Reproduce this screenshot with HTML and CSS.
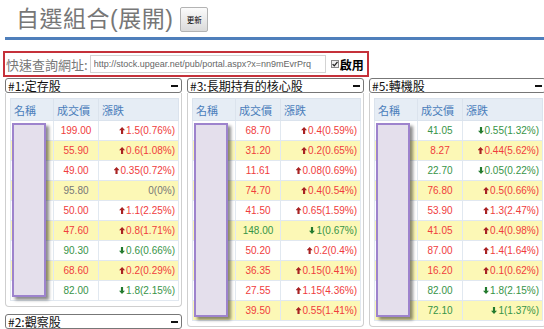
FILE: index.html
```html
<!DOCTYPE html>
<html lang="zh-Hant">

<head>
    <meta charset="UTF-8">
    <title>自選組合(展開)</title>
    <link rel="stylesheet" href="styles.css">
</head>

<body>

    <div class="top">
        <h1 class="title">自選組合(展開)</h1>
        <button class="refresh">更新</button>
    </div>
    <div class="rule"></div>

    <div class="quick">
        <span class="quick-label">快速查詢網址:</span>
        <input class="quick-url" type="text" value="http://stock.upgear.net/pub/portal.aspx?x=nn9mEvrPrq">
        <svg class="check" viewBox="0 0 8 8" width="8" height="8">
            <rect x="0.5" y="0.5" width="7" height="7" fill="#eee" stroke="#888" />
            <path d="M1.6 4.1 L3.3 5.8 L6.5 1.8" fill="none" stroke="#222" stroke-width="1.3" />
        </svg>
        <span class="enable">啟用</span>
    </div>

    <div class="board">
        <!-- column 1 -->
        <div class="col">
            <div class="panel">
                <div class="panel-head"><span>#1:定存股</span><i class="fold"></i></div>
                <div class="panel-body">
                    <div class="grid-wrap">
                        <table class="quotes">
                            <colgroup><col class="c-name"><col class="c-price"><col class="c-chg"></colgroup>
                            <thead><tr><th>名稱</th><th>成交價</th><th>漲跌</th></tr></thead>
                            <tbody>
                                <tr class="up"><td></td><td class="price">199.00</td><td class="chg">1.5(0.76%)</td></tr>
                                <tr class="up"><td></td><td class="price">55.90</td><td class="chg">0.6(1.08%)</td></tr>
                                <tr class="up"><td></td><td class="price">49.00</td><td class="chg">0.35(0.72%)</td></tr>
                                <tr class="flat"><td></td><td class="price">95.80</td><td class="chg">0(0%)</td></tr>
                                <tr class="up"><td></td><td class="price">50.00</td><td class="chg">1.1(2.25%)</td></tr>
                                <tr class="up"><td></td><td class="price">47.60</td><td class="chg">0.8(1.71%)</td></tr>
                                <tr class="down"><td></td><td class="price">90.30</td><td class="chg">0.6(0.66%)</td></tr>
                                <tr class="up"><td></td><td class="price">68.60</td><td class="chg">0.2(0.29%)</td></tr>
                                <tr class="down"><td></td><td class="price">82.00</td><td class="chg">1.8(2.15%)</td></tr>
                            </tbody>
                        </table>
                        <div class="mask"></div>
                    </div>
                </div>
            </div>
            <div class="panel">
                <div class="panel-head"><span>#2:觀察股</span><i class="fold"></i></div>
                <div class="panel-body panel-empty"></div>
            </div>
        </div>

        <!-- column 2 -->
        <div class="col">
            <div class="panel">
                <div class="panel-head"><span>#3:長期持有的核心股</span><i class="fold"></i></div>
                <div class="panel-body">
                    <div class="grid-wrap">
                        <table class="quotes">
                            <colgroup><col class="c-name"><col class="c-price"><col class="c-chg"></colgroup>
                            <thead><tr><th>名稱</th><th>成交價</th><th>漲跌</th></tr></thead>
                            <tbody>
                                <tr class="up"><td></td><td class="price">68.70</td><td class="chg">0.4(0.59%)</td></tr>
                                <tr class="up"><td></td><td class="price">31.20</td><td class="chg">0.2(0.65%)</td></tr>
                                <tr class="up"><td></td><td class="price">11.61</td><td class="chg">0.08(0.69%)</td></tr>
                                <tr class="up"><td></td><td class="price">74.70</td><td class="chg">0.4(0.54%)</td></tr>
                                <tr class="up"><td></td><td class="price">41.50</td><td class="chg">0.65(1.59%)</td></tr>
                                <tr class="down"><td></td><td class="price">148.00</td><td class="chg">1(0.67%)</td></tr>
                                <tr class="up"><td></td><td class="price">50.20</td><td class="chg">0.2(0.4%)</td></tr>
                                <tr class="up"><td></td><td class="price">36.35</td><td class="chg">0.15(0.41%)</td></tr>
                                <tr class="up"><td></td><td class="price">27.55</td><td class="chg">1.15(4.36%)</td></tr>
                                <tr class="up"><td></td><td class="price">39.50</td><td class="chg">0.55(1.41%)</td></tr>
                            </tbody>
                        </table>
                        <div class="mask"></div>
                    </div>
                </div>
            </div>
        </div>

        <!-- column 3 -->
        <div class="col">
            <div class="panel">
                <div class="panel-head"><span>#5:轉機股</span><i class="fold"></i></div>
                <div class="panel-body">
                    <div class="grid-wrap">
                        <table class="quotes">
                            <colgroup><col class="c-name"><col class="c-price"><col class="c-chg"></colgroup>
                            <thead><tr><th>名稱</th><th>成交價</th><th>漲跌</th></tr></thead>
                            <tbody>
                                <tr class="down"><td></td><td class="price">41.05</td><td class="chg">0.55(1.32%)</td></tr>
                                <tr class="up"><td></td><td class="price">8.27</td><td class="chg">0.44(5.62%)</td></tr>
                                <tr class="down"><td></td><td class="price">22.70</td><td class="chg">0.05(0.22%)</td></tr>
                                <tr class="up"><td></td><td class="price">76.80</td><td class="chg">0.5(0.66%)</td></tr>
                                <tr class="up"><td></td><td class="price">53.90</td><td class="chg">1.3(2.47%)</td></tr>
                                <tr class="up"><td></td><td class="price">41.05</td><td class="chg">0.4(0.98%)</td></tr>
                                <tr class="up"><td></td><td class="price">87.00</td><td class="chg">1.4(1.64%)</td></tr>
                                <tr class="up"><td></td><td class="price">16.20</td><td class="chg">0.1(0.62%)</td></tr>
                                <tr class="down"><td></td><td class="price">82.00</td><td class="chg">1.8(2.15%)</td></tr>
                                <tr class="down"><td></td><td class="price">72.10</td><td class="chg">1(1.37%)</td></tr>
                            </tbody>
                        </table>
                        <div class="mask"></div>
                    </div>
                </div>
            </div>
        </div>
    </div>

</body>

</html>
```

FILE: styles.css
```css
* {
    box-sizing: border-box;
}

html,
body {
    overflow: hidden;
}

body {
    margin: 0;
    padding: 0 0 0 3px;
    background: #fff;
    color: #333;
    font-family: "Liberation Sans", "Noto Sans CJK TC", sans-serif;
}

/* title bar */
.top {
    display: flex;
    align-items: flex-start;
    height: 37px;
    padding-left: 13px;
}

.title {
    margin: 5px 0 0;
    font-size: 23px;
    line-height: 28px;
    font-weight: normal;
    color: #777;
    letter-spacing: 0.5px;
}

.refresh {
    margin: 7px 0 0 7px;
    width: 28px;
    height: 25px;
    padding: 0;
    border: 1px solid #b3b3b3;
    border-radius: 2px;
    background: linear-gradient(#fbfbfb, #dadada);
    font-family: "Noto Sans CJK TC", sans-serif;
    font-size: 7.5px;
    color: #000;
}

.rule {
    height: 3px;
    margin-left: 2px;
    background: #4f7fbb;
}

/* quick url box */
.quick {
    display: flex;
    align-items: center;
    width: 366px;
    height: 26px;
    margin-top: 11px;
    padding-left: 1px;
    border: 2px solid #c5313a;
    white-space: nowrap;
}

.quick > * {
    flex: none;
}

.quick-label {
    font-family: "Noto Sans CJK TC", sans-serif;
    font-size: 13px;
    color: #777;
}

.quick-url {
    width: 236px;
    height: 18px;
    margin-left: 2px;
    padding: 0 3px;
    border: 1px solid #d3d3d3;
    font-family: "Liberation Sans", sans-serif;
    font-size: 9px;
    color: #666;
}

.check {
    margin-left: 5px;
}

.enable {
    margin-left: 1px;
    font-family: "Noto Sans CJK TC", sans-serif;
    font-size: 12px;
    font-weight: bold;
    color: #000;
}

/* panels */
.board {
    display: flex;
    gap: 5px;
    margin-top: 1px;
    padding-left: 2px;
}

.col {
    display: flex;
    flex-direction: column;
    gap: 7px;
    flex: none;
    width: 177px;
}

.panel-head {
    display: flex;
    align-items: center;
    justify-content: space-between;
    height: 15px;
    padding: 0 3px 0 2px;
    border: 1px solid #777;
    border-radius: 3px;
    font-family: "Noto Sans CJK TC", sans-serif;
    font-size: 12px;
    line-height: 13px;
    color: #111;
    overflow: hidden;
}

.fold {
    flex: none;
    width: 7px;
    height: 2px;
    background: #111;
}

.panel-body {
    padding: 5px 3px 5px 4px;
    border: 1px solid #cfcfcf;
    border-top: 0;
    border-radius: 0 0 4px 4px;
}

.panel-empty {
    height: 40px;
}

.grid-wrap {
    position: relative;
}

.quotes {
    width: 168px;
    border-collapse: collapse;
    table-layout: fixed;
    font-size: 10px;
}

.c-name {
    width: 43px;
}

.c-price {
    width: 45px;
}

.c-chg {
    width: 80px;
}

.quotes th {
    height: 22px;
    padding: 0 0 0 3px;
    border: 1px solid #dbe3ed;
    background: #e6edf5;
    font-family: "Noto Sans CJK TC", sans-serif;
    font-size: 11px;
    font-weight: normal;
    color: #4a7dbb;
    text-align: left;
}

.quotes td {
    height: 20px;
    padding: 0 3px;
    border: 1px solid #e1e8f0;
}

.quotes tbody tr:nth-child(even) td {
    background: #fcf8b6;
}

.price {
    text-align: center;
}

.chg {
    text-align: right;
}

.up {
    color: #f03c3c;
}

.down {
    color: #379447;
}

.flat {
    color: #777;
}

.up .chg::before,
.down .chg::before {
    content: "";
    display: inline-block;
    width: 6px;
    height: 7px;
    margin-right: 1px;
    clip-path: polygon(50% 0, 100% 48%, 68% 48%, 68% 100%, 32% 100%, 32% 48%, 0 48%);
}

.up .chg::before {
    background: #a82222;
}

.down .chg::before {
    background: #237a2e;
    transform: rotate(180deg);
}

/* blocked-out stock names */
.mask {
    position: absolute;
    top: 25px;
    bottom: 4px;
    left: 2px;
    width: 34px;
    border: 2px solid #9d83cd;
    background: #e4dfec;
    box-shadow: 3px 3px 3px rgba(0, 0, 0, 0.45);
}
```
